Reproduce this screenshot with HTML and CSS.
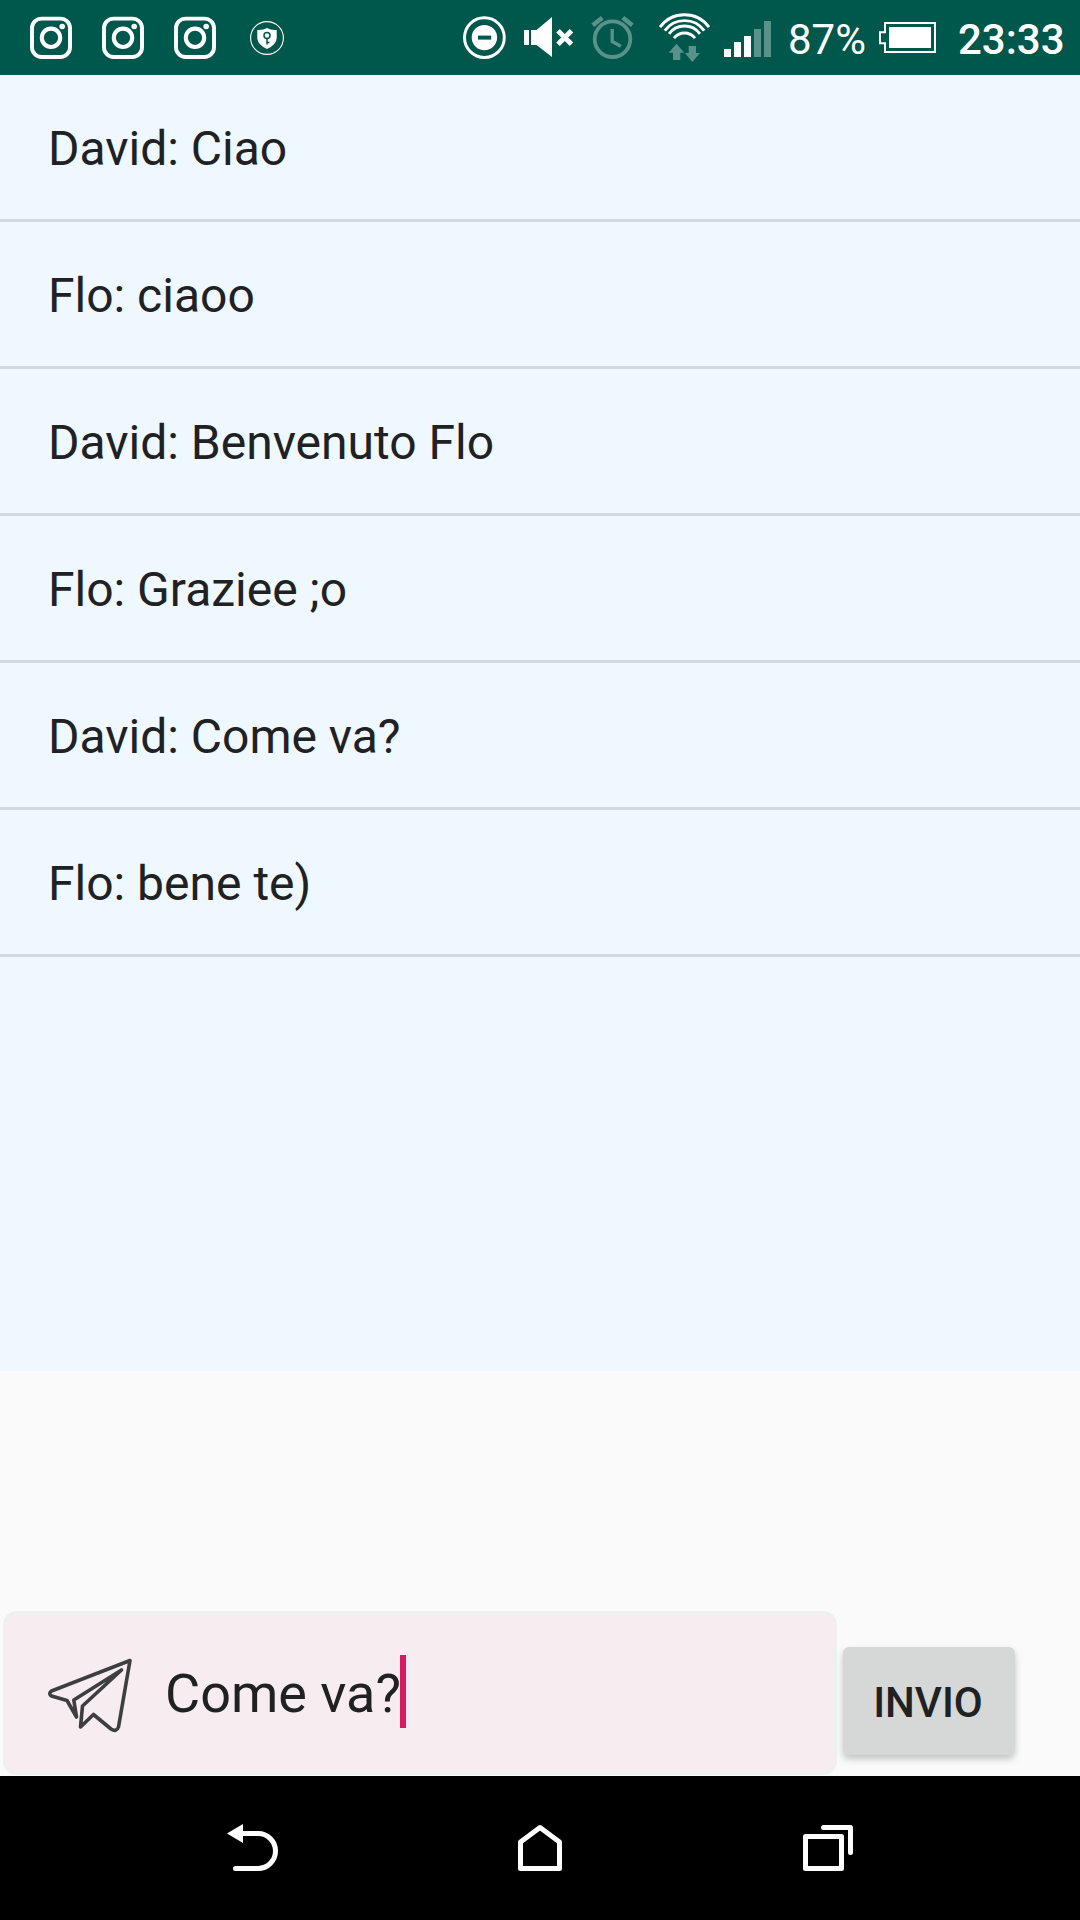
FILE: index.html
```html
<!DOCTYPE html>
<html lang="it">
<head>
<meta charset="utf-8">
<title>Chat</title>
<link rel="stylesheet" href="styles.css">
</head>
<body>
<svg class="defs" width="0" height="0" aria-hidden="true">
  <symbol id="camera" viewBox="30 0 42 75">
    <rect x="32" y="18.6" width="38" height="38.4" rx="9.5" fill="none" stroke="#fff" stroke-width="3.9"/>
    <circle cx="51" cy="37.8" r="9.2" fill="none" stroke="#fff" stroke-width="4.1"/>
    <circle cx="62.2" cy="26.5" r="2.8" fill="#fff"/>
  </symbol>
</svg>
<header class="status">
  <div class="notifications">
    <svg class="camera"><use href="#camera"/></svg>
    <svg class="camera"><use href="#camera"/></svg>
    <svg class="camera"><use href="#camera"/></svg>
    <svg class="vpn" viewBox="249 0 36 75">
      <circle cx="267" cy="38" r="16.4" fill="none" stroke="#fff" stroke-width="1.1"/>
      <path d="M257.3 30Q263 30.500 267 28Q271 30.500 276.700 30V38.5Q276 45 267 49Q258 45 257.3 38.5Z" fill="#fff"/>
      <circle cx="267" cy="35.4" r="3" fill="none" stroke="#00574b" stroke-width="1.5"/>
      <path d="M267 38.5V44.5M267 42.5H269.5" fill="none" stroke="#00574b" stroke-width="1.5"/>
    </svg>
  </div>
  <div class="system">
    <svg class="dnd" viewBox="462 0 45 75">
      <circle cx="484.4" cy="37.6" r="19.9" fill="none" stroke="#fff" stroke-width="3"/>
      <circle cx="484.4" cy="37.6" r="12.7" fill="#fff"/>
      <path d="M478 37.6h13.2" stroke="#00574b" stroke-width="4"/>
    </svg>
    <svg class="mute" viewBox="523 0 51 75">
      <path d="M524 30h5v15h-5zM531 30h5.500L552 17v40L536.500 45H531z" fill="#fff"/>
      <path d="M558 30.700l13.500 13.500M571.500 30.700l-13.500 13.500" stroke="#fff" stroke-width="5"/>
    </svg>
    <svg class="alarm" viewBox="591 0 44 75">
      <g fill="none" stroke="#59928a">
        <circle cx="612.5" cy="39.2" r="17.8" stroke-width="3.800"/>
        <path d="M612.200 29V41.500L620.800 46.300" stroke-width="3.300"/>
        <path d="M592.800 25.200L602.300 17.800M622.800 17.800L632.300 25.200" stroke-width="4.600"/>
      </g>
    </svg>
    <svg class="wifi" viewBox="658 0 53 75">
      <g fill="none" stroke="#fff" stroke-width="2.900">
        <path d="M660 27.200A30.3 30.3 0 0 1 709 27.200"/>
        <path d="M664.800 30.700A24.300 24.300 0 0 1 704.200 30.700"/>
        <path d="M669.100 33.800A19 19 0 0 1 699.900 33.800"/>
        <path d="M674 38.200A13.200 13.200 0 0 1 695 38.200"/>
      </g>
      <path d="M668.700 52.700L676.500 43.700L684.300 52.700H680.300V60H673V52.700ZM688.700 46H696V53H700L692.400 62L684.800 53H688.700Z" fill="#59928a"/>
    </svg>
    <svg class="signal" viewBox="724 0 47 75">
      <path d="M724 49h7v8h-7zM734 42h7v15h-7zM744 36h7v21h-7z" fill="#fff"/>
      <path d="M754 29h7v28h-7zM764 21h7v36h-7z" fill="#59928a"/>
    </svg>
    <span class="percent">87%</span>
    <svg class="battery" viewBox="879 0 57 75">
      <path d="M885 23H935V52H885V43.200H880V32.200H885Z" fill="none" stroke="#fff" stroke-width="2"/>
      <path d="M889 27h42v21h-42z" fill="#fff"/>
    </svg>
    <span class="clock">23:33</span>
  </div>
</header>
<main class="messages">
  <div class="message">David: Ciao</div>
  <div class="message">Flo: ciaoo</div>
  <div class="message">David: Benvenuto Flo</div>
  <div class="message">Flo: Graziee ;o</div>
  <div class="message">David: Come va?</div>
  <div class="message">Flo: bene te)</div>
</main>
<section class="composer">
  <div class="field">
    <svg class="plane" viewBox="45 1655 90 80">
      <path d="M130 1660.500L51.500 1691Q48 1693.500 51.500 1696L67 1700.500L76.500 1717L73.800 1700L121.500 1670L82.500 1706L80.500 1727L93.500 1714.500L111 1729Q116.500 1732.500 118.500 1727Z" fill="none" stroke="#3e3e40" stroke-width="3.600" stroke-linejoin="round"/>
    </svg>
    <span class="draft">Come va?</span><i class="caret"></i>
  </div>
  <button class="send">INVIO</button>
</section>
<nav class="navbar">
  <svg class="key" viewBox="222 1776 62 144">
    <path d="M227 1833.500L243 1824V1843Z" fill="#fff"/>
    <path d="M241 1833.500H258A17.500 17.500 0 0 1 258 1868.500H235.500" fill="none" stroke="#fff" stroke-width="5" stroke-linecap="round"/>
  </svg>
  <svg class="key" viewBox="509 1776 62 144">
    <path d="M520.500 1842L540 1827.500L559.500 1842V1868.500H520.500Z" fill="none" stroke="#fff" stroke-width="5" stroke-linejoin="round"/>
  </svg>
  <svg class="key" viewBox="796 1776 62 144">
    <path d="M805.500 1836.500H841.500V1868.500H805.500ZM823.500 1827.500H850.500V1852.500" fill="none" stroke="#fff" stroke-width="5" stroke-linejoin="round" stroke-linecap="round"/>
  </svg>
</nav>
</body>
</html>
```
FILE: styles.css
```css
* { box-sizing: border-box; }

body {
  margin: 0;
  width: 1080px;
  height: 1920px;
  display: flex;
  flex-direction: column;
  overflow: hidden;
  background: #fafafa;
  color: #202122;
  font-family: Roboto, sans-serif;
}

svg { display: block; flex: none; }
.defs { position: absolute; }

.status {
  height: 75px;
  flex: none;
  display: flex;
  justify-content: space-between;
  padding: 0 15px 0 30px;
  background: #00574b;
  color: #fff;
}
.status svg { height: 75px; }
.notifications { display: flex; gap: 30px; }
.camera { width: 42px; }
.vpn { width: 36px; margin-left: 3px; }

.system { display: flex; font-size: 42px; line-height: 80px; }
.dnd { width: 45px; margin-right: 16px; }
.mute { width: 51px; margin-right: 17px; }
.alarm { width: 44px; margin-right: 23px; }
.wifi { width: 53px; margin-right: 13px; }
.signal { width: 47px; }
.percent { width: 108px; padding-left: 17px; white-space: nowrap; }
.battery { width: 57px; }
.clock { width: 129px; padding-left: 22px; font-weight: 500; white-space: nowrap; }

.messages { flex: 0 0 1296px; background: #eff7ff; }
.message {
  height: 147px;
  padding: 3px 48px 0;
  border-bottom: 3px solid #d2dae1;
  font-size: 48px;
  line-height: 142px;
}

.composer {
  flex: 1;
  display: flex;
  align-items: flex-end;
  gap: 6px;
  padding: 0 65px 1px 3px;
}
.field {
  width: 834px;
  height: 164px;
  display: flex;
  align-items: center;
  padding: 0 39px;
  border: 3px solid #eeefef;
  border-radius: 14px;
  background: #f7edf1;
}
.plane { width: 90px; height: 80px; margin-top: 4px; }
.draft { margin: 2px -1px 0 30px; font-size: 54px; line-height: 72px; }
.caret { width: 6px; height: 73px; margin-bottom: 3px; background: #d81b60; }
.send {
  width: 172px;
  height: 108px;
  margin-bottom: 20px;
  padding: 2px 2px 0 0;
  border: 0;
  border-radius: 6px;
  background: #d6d7d7;
  box-shadow: 0 4px 7px rgba(0, 0, 0, .22);
  color: #202122;
  font: 500 42px Roboto, sans-serif;
}

.navbar {
  height: 144px;
  flex: none;
  display: flex;
  justify-content: space-between;
  padding: 0 222px;
  background: #000;
}
.key { width: 62px; height: 144px; }
```
